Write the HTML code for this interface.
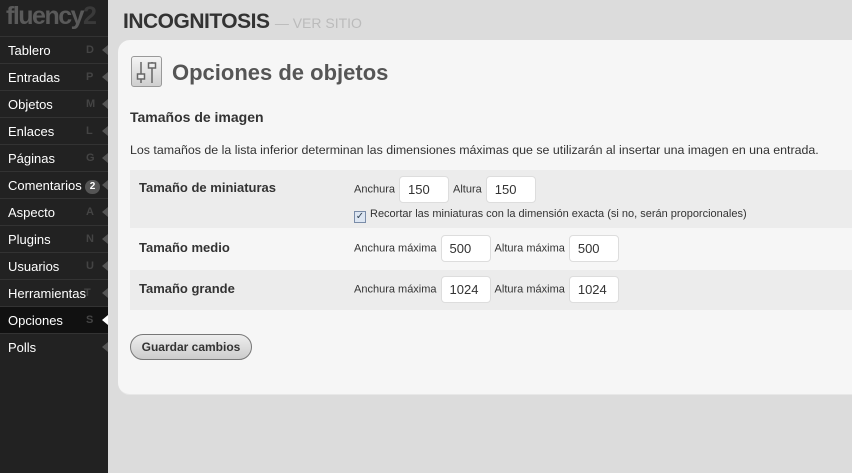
<!DOCTYPE html>
<html><head><meta charset="utf-8"><style>
*{margin:0;padding:0;box-sizing:border-box}
body{width:852px;height:473px;overflow:hidden;background:#dcdcdc;font-family:"Liberation Sans",Arial,sans-serif;position:relative}
#side{position:absolute;left:0;top:0;width:108px;height:473px;background:#222}
.logo{position:absolute;left:6px;top:2px;font-size:25px;font-weight:bold;color:#5a5a5a;letter-spacing:-1.5px}
.logo span{color:#3a3a3a}
.item{position:absolute;left:0;width:108px;height:27px;border-top:1px solid #333;color:#fff;font-size:13px;line-height:27px;padding-left:8px}
.item .k{position:absolute;left:86px;top:0;color:#444;font-size:11px;font-weight:bold}
.item .a{position:absolute;right:0;top:8px;width:0;height:0;border-top:5px solid transparent;border-bottom:5px solid transparent;border-right:6px solid #555}
.item.sel{background:#111}
.item.sel .a{border-right-color:#fff}
.badge{display:inline-block;background:#555;color:#fff;border-radius:8px;font-size:10px;font-weight:bold;padding:0 5px;line-height:14px;margin-left:3px;vertical-align:1px}
#top{position:absolute;left:123px;top:10px;font-size:21px;font-weight:bold;color:#333;letter-spacing:-0.5px}
#top span{font-size:14px;font-weight:normal;color:#bbb;letter-spacing:0}
#panel{position:absolute;left:118px;top:40px;width:740px;height:355px;background:#f6f6f6;border-radius:12px 0 0 12px;border-bottom:1px solid #e8e8e8}
.ico{position:absolute;left:13px;top:16px;width:31px;height:31px;border:1px solid #999;border-radius:3px;background:linear-gradient(#f4f4f4,#cfcfcf)}
h1{position:absolute;left:54px;top:20px;font-size:22px;color:#555;font-weight:bold}
h3{position:absolute;left:12px;top:69px;font-size:14px;color:#333;font-weight:bold}
.desc{position:absolute;left:12px;top:103px;font-size:12.4px;color:#333}
.row{position:absolute;left:12px;width:730px;background:#ececec}
.row .l{position:absolute;left:9px;font-size:13px;font-weight:bold;color:#333}
.f{position:absolute;font-size:11px;color:#333}
.in{display:inline-block;background:#fff;border:1px solid #ddd;border-radius:4px;height:27px;line-height:25px;padding-left:8px;font-size:13px;color:#333;vertical-align:middle;margin:0 4px}
.btn{position:absolute;left:12px;top:294px;width:122px;height:26px;border:1px solid #777;border-radius:13px;background:linear-gradient(#eee,#ccc);font-size:12px;font-weight:bold;color:#333;text-align:center;line-height:24px}
.cb{display:inline-block;width:12px;height:12px;border:1px solid #7a8ca8;background:#dde6f2;vertical-align:-2px;font-size:10px;line-height:10px;text-align:center;color:#345;margin-right:4px}
</style></head><body>
<div id="side">
<div class="logo">fluency<span>2</span></div>
<div class="item" style="top:36px">Tablero<span class="k">D</span><i class="a"></i></div>
<div class="item" style="top:63px">Entradas<span class="k">P</span><i class="a"></i></div>
<div class="item" style="top:90px">Objetos<span class="k">M</span><i class="a"></i></div>
<div class="item" style="top:117px">Enlaces<span class="k">L</span><i class="a"></i></div>
<div class="item" style="top:144px">Páginas<span class="k">G</span><i class="a"></i></div>
<div class="item" style="top:171px">Comentarios<span class="badge">2</span><i class="a"></i></div>
<div class="item" style="top:198px">Aspecto<span class="k">A</span><i class="a"></i></div>
<div class="item" style="top:225px">Plugins<span class="k">N</span><i class="a"></i></div>
<div class="item" style="top:252px">Usuarios<span class="k">U</span><i class="a"></i></div>
<div class="item" style="top:279px">Herramientas<span class="k" style="left:84px">T</span><i class="a"></i></div>
<div class="item sel" style="top:306px">Opciones<span class="k">S</span><i class="a"></i></div>
<div class="item" style="top:333px">Polls<i class="a"></i></div>
</div>
<div id="top">INCOGNITOSIS <span>— VER SITIO</span></div>
<div id="panel">
<div class="ico"><svg width="29" height="29" viewBox="0 0 29 29"><g fill="none" stroke="#666" stroke-width="1.5"><line x1="9" y1="5" x2="9" y2="26"/><line x1="20" y1="5" x2="20" y2="26"/><rect x="5.5" y="17" width="7" height="5" fill="#eee"/><rect x="16.5" y="6" width="7" height="5" fill="#eee"/></g></svg></div>
<h1>Opciones de objetos</h1>
<h3>Tamaños de imagen</h3>
<div class="desc">Los tamaños de la lista inferior determinan las dimensiones máximas que se utilizarán al insertar una imagen en una entrada.</div>
<div class="row" style="top:130px;height:58px"><div class="l" style="top:10px">Tamaño de miniaturas</div>
<div class="f" style="left:224px;top:6px">Anchura<span class="in" style="width:50px">150</span>Altura<span class="in" style="width:50px">150</span></div>
<div class="f" style="left:224px;top:38px"><span class="cb">✓</span>Recortar las miniaturas con la dimensión exacta (si no, serán proporcionales)</div></div>
<div class="row" style="top:190px;height:38px;background:#f6f6f6"><div class="l" style="top:10px">Tamaño medio</div>
<div class="f" style="left:224px;top:5px">Anchura máxima<span class="in" style="width:50px">500</span>Altura máxima<span class="in" style="width:50px">500</span></div></div>
<div class="row" style="top:230px;height:40px"><div class="l" style="top:11px">Tamaño grande</div>
<div class="f" style="left:224px;top:6px">Anchura máxima<span class="in" style="width:50px">1024</span>Altura máxima<span class="in" style="width:50px">1024</span></div></div>
<div class="btn">Guardar cambios</div>
</div>
</body></html>
